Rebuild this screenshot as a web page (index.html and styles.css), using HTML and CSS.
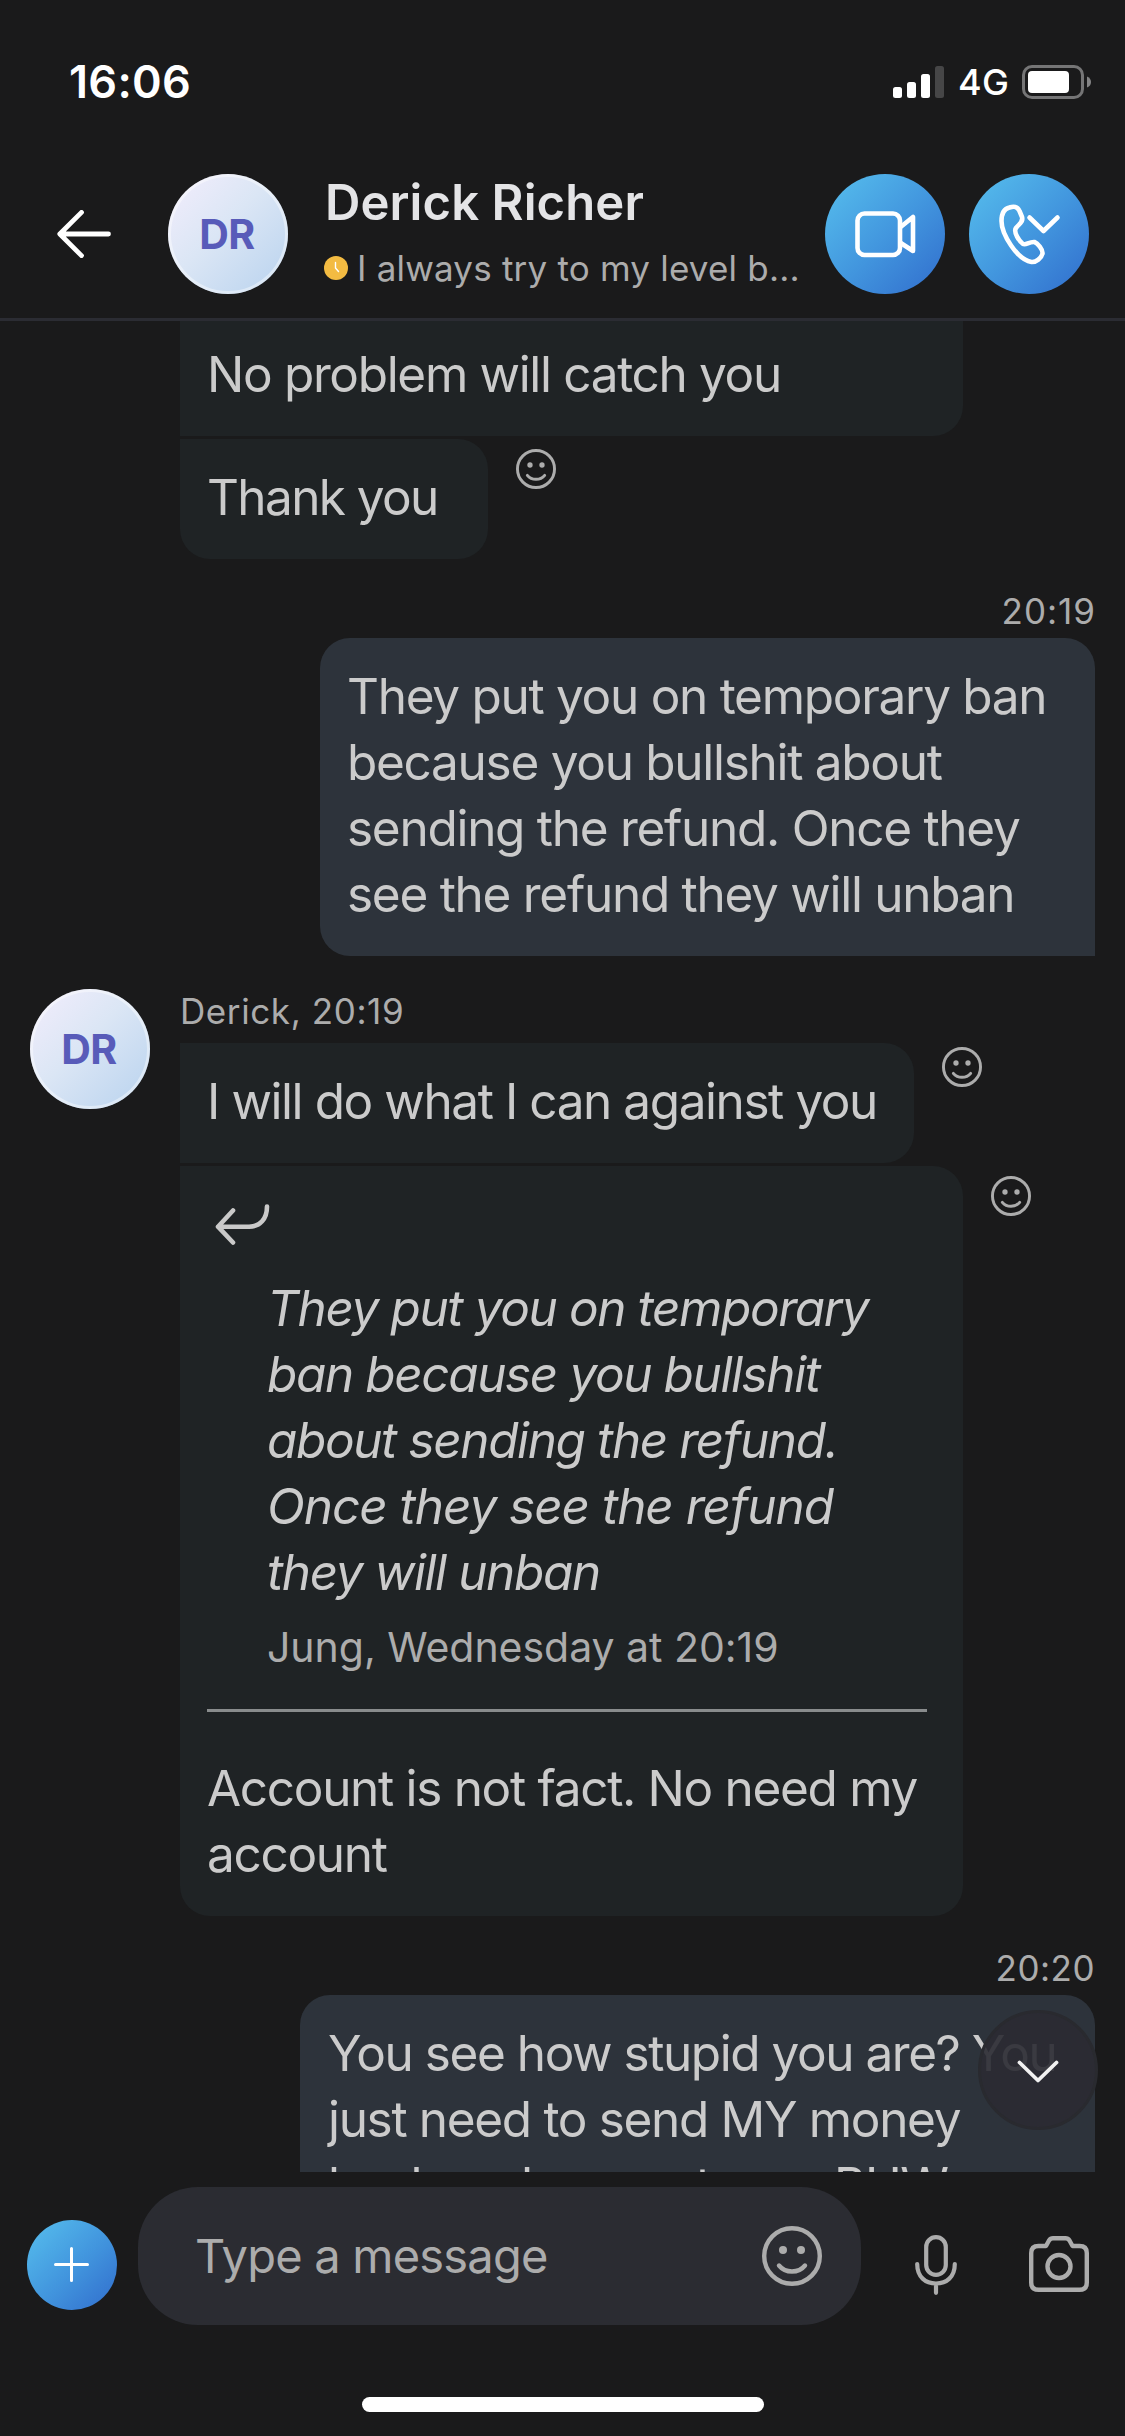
FILE: index.html
```html
<!DOCTYPE html>
<html lang="en">
<head>
<meta charset="utf-8">
<title>Derick Richer</title>
<link rel="stylesheet" href="styles.css">
</head>
<body>
<svg class="defs" aria-hidden="true">
  <symbol id="smile" viewBox="0 0 60 60">
    <circle cx="30" cy="30" r="27.8" fill="none" stroke="currentColor" stroke-width="4.4"/>
    <circle cx="21" cy="24" r="4" fill="currentColor"/>
    <circle cx="39" cy="24" r="4" fill="currentColor"/>
    <path d="M17 39.5C23.500 47.500 36.500 47.500 43 39.500" fill="none" stroke="currentColor" stroke-width="4.4" stroke-linecap="round"/>
  </symbol>
</svg>
<div class="phone">
  <div class="status">
    <span class="clock">16:06</span>
    <div class="indicators">
      <svg class="signal" width="51" height="32" viewBox="0 0 51 32" fill="#fff">
        <rect x="0" y="21" width="9" height="11" rx="2.500"/>
        <rect x="14" y="16" width="9" height="16" rx="2.500"/>
        <rect x="28" y="8" width="9" height="24" rx="2.500"/>
        <rect x="42" y="0" width="9" height="32" rx="2.500" fill="#464647"/>
      </svg>
      <span class="network">4G</span>
      <svg class="battery" width="70" height="34" viewBox="0 0 70 34">
        <rect x="1.500" y="1.500" width="59" height="31" rx="8.500" fill="none" stroke="#757576" stroke-width="3"/>
        <rect x="6" y="6" width="41" height="22" rx="4" fill="#fff"/>
        <path d="M65 11.500C68 12.500 69 15 69 17S68 21.500 65 22.500Z" fill="#848485"/>
      </svg>
    </div>
  </div>

  <header class="header">
    <svg class="back" width="54" height="48" viewBox="0 0 54 48" fill="none" stroke="#fff" stroke-width="4.800" stroke-linecap="round" stroke-linejoin="round"><path d="M24.500 2.400L2.800 24L24.500 45.600M3 24H51.500"/></svg>
    <div class="avatar">DR</div>
    <div class="contact">
      <div class="name">Derick Richer</div>
      <div class="mood">
        <svg width="24" height="24" viewBox="0 0 24 24"><circle cx="12" cy="12" r="12" fill="#f3bb42"/><path d="M11.500 6.500V12L14.500 15.500" fill="none" stroke="#fff" stroke-width="1.400" stroke-linecap="round" stroke-linejoin="round"/></svg>
        <span>I always try to my level b...</span>
      </div>
    </div>
    <div class="calls">
      <svg class="round" viewBox="0 0 120 120" fill="none" stroke="#fff" stroke-width="4.600" stroke-linejoin="round"><rect x="32.500" y="39.500" width="42.500" height="41.500" rx="7"/><path d="M75 53.500L88 43V77L75 68.500"/></svg>
      <svg class="round" viewBox="0 0 120 120" fill="none" stroke="#fff" stroke-width="4.600" stroke-linecap="round" stroke-linejoin="round"><path d="M32.500 47C32.500 39 36 34.500 40.500 33.500C46 31.500 48.500 33 50.500 37L53 43C54.500 48 50 50 47 54C44 58 50.500 67.500 54 70C57 71.500 60 67.500 65.500 68C68.500 69 74 75.500 73.500 79.500C72.500 84 67 88.500 62.500 88C48 85.500 32.500 60 32.500 47Z"/><path d="M60.500 43.500L74.500 57L88.500 43.500"/></svg>
    </div>
  </header>

  <main class="chat">
    <div class="row"><div class="bubble in clipped">No problem will catch you</div></div>
    <div class="row"><div class="bubble in last thanks">Thank you</div><svg class="react low"><use href="#smile"/></svg></div>

    <div class="time">20:19</div>
    <div class="bubble out">They put you on temporary ban<br>because you bullshit about<br>sending the refund. Once they<br>see the refund they will unban</div>

    <section class="group">
      <div class="avatar">DR</div>
      <div class="messages">
        <div class="sender">Derick, 20:19</div>
        <div class="row"><div class="bubble in against">I will do what I can against you</div><svg class="react"><use href="#smile"/></svg></div>
        <div class="row">
          <div class="bubble in last reply">
            <svg class="reply-icon" width="56" height="42" viewBox="0 0 56 42" fill="none" stroke="#c9c9c9" stroke-width="4.600" stroke-linecap="round" stroke-linejoin="round"><path d="M18 6.500L3 22.700L18 38.500M3 22.700H34C45 22.700 52 15 52 2.500"/></svg>
            <blockquote class="quote">
              <p class="quoted">They put you on temporary<br>ban because you bullshit<br>about sending the refund.<br><span class="looser">Once they see the refund</span><br>they will unban</p>
              <footer class="source">Jung, Wednesday at 20:19</footer>
            </blockquote>
            <p class="answer">Account is not fact. No need my<br>account</p>
          </div>
          <svg class="react low"><use href="#smile"/></svg>
        </div>
      </div>
    </section>

    <div class="time late">20:20</div>
    <div class="bubble out wide">You see how stupid you are? You<br><span class="looser">just need to send MY money</span><br>back and respect your BHW</div>

    <div class="scroll-down"><svg width="42" height="24" viewBox="0 0 42 24" fill="none" stroke="#f1f1f1" stroke-width="3.800" stroke-linecap="round" stroke-linejoin="round"><path d="M2.500 2.500L21 20.500L39.500 2.500"/></svg></div>
  </main>

  <footer class="composer">
    <svg class="round add" viewBox="0 0 90 90" stroke="#fff" stroke-width="3" stroke-linecap="round"><path d="M28.500 44.500H60.500M44.500 28.500V60.500"/></svg>
    <div class="field"><span>Type a message</span><svg class="emoji"><use href="#smile"/></svg></div>
    <svg class="mic" width="42" height="60" viewBox="0 0 42 60" fill="none" stroke="#acacac" stroke-width="4.200" stroke-linecap="round"><rect x="11.200" y="2.200" width="19.600" height="37.600" rx="9.800"/><path d="M2.200 29C2.200 42 10.500 48.500 21 48.500S39.800 42 39.800 29M21 49V57.800"/></svg>
    <svg class="camera" width="60" height="56" viewBox="0 0 60 56" fill="none" stroke="#acacac" stroke-width="4.400" stroke-linejoin="round"><path d="M2.200 17Q2.200 10 9.500 10H17L20 4.500Q21.500 2.200 24 2.200H36.500Q39 2.200 40.500 4.500L43.500 10H50.500Q57.800 10 57.800 17V46.500Q57.800 53.800 50.500 53.800H9.500Q2.200 53.800 2.200 46.500Z"/><circle cx="30" cy="30.500" r="11.500"/></svg>
  </footer>
  <div class="home"></div>
</div>
</body>
</html>
```
FILE: styles.css
```css
* { box-sizing: border-box; }

body {
  margin: 0;
  background: #1a1a1b;
  font-family: Inter, "Liberation Sans", sans-serif;
  color: #cbcbcb;
}

svg { display: block; flex: none; }
p, blockquote { margin: 0; }

.defs { display: none; }

.phone {
  display: flex;
  flex-direction: column;
  width: 1125px;
  height: 2436px;
  overflow: hidden;
}

/* Status bar */
.status {
  display: flex;
  justify-content: space-between;
  height: 147px;
  padding: 52px 33px 0 69px;
  color: #fff;
}

.clock {
  font-size: 45px;
  font-weight: 600;
  line-height: 60px;
  letter-spacing: .3px;
}

.indicators { display: flex; align-items: flex-start; }
.signal { margin-top: 14px; }

.network {
  width: 78px;
  padding-left: 14px;
  font-size: 36px;
  font-weight: 500;
  line-height: 60px;
  letter-spacing: .3px;
}

.battery { margin-top: 13px; }

/* Conversation header */
.header {
  display: flex;
  align-items: flex-start;
  height: 174px;
  padding: 27px 36px 0 57px;
  border-bottom: 3px solid #2b2c33;
}

.back { margin: 36px 57px 0 0; }

.avatar {
  display: flex;
  flex: none;
  align-items: center;
  justify-content: center;
  width: 120px;
  height: 120px;
  padding-right: 2px;
  border-radius: 50%;
  background: linear-gradient(135deg, #efecfb 8%, #dbe6f5 45%, #bdd5ef 92%);
  box-shadow: inset 0 0 0 3px rgba(255, 255, 255, .42);
  color: #585bb9;
  font-size: 41px;
  font-weight: 700;
  letter-spacing: -.4px;
}

.contact { flex: 1; margin-left: 36px; white-space: nowrap; }

.name {
  padding-left: 1px;
  color: #e4e4e6;
  font-size: 49px;
  font-weight: 600;
  line-height: 58px;
  letter-spacing: .1px;
}

.mood {
  display: flex;
  align-items: center;
  gap: 9px;
  margin-top: 12px;
  color: #acacac;
  font-size: 35px;
  line-height: 48px;
  letter-spacing: .2px;
}

.calls { display: flex; gap: 24px; }

.round {
  width: 120px;
  height: 120px;
  border-radius: 50%;
  background: linear-gradient(135deg, #52b6ea 12%, #4296de 52%, #3475d0 90%);
}

/* Messages */
.chat {
  position: relative;
  display: flex;
  flex-direction: column;
  flex: none;
  height: 1851px;
  overflow: hidden;
}

.row { display: flex; align-items: flex-start; }
.chat > .row { margin-left: 180px; }
.row + .row { margin-top: 3px; }

.bubble {
  flex: none;
  padding: 25px 27px 29px;
  border-radius: 30px;
  font-size: 49.5px;
  line-height: 66px;
  letter-spacing: -1.28px;
  white-space: nowrap;
}

.in { background: #1f2325; border-radius: 0 30px 30px 0; }
.in.last { border-bottom-left-radius: 30px; }
.clipped { width: 783px; padding-top: 20px; border-top-right-radius: 0; letter-spacing: -1.33px; }
.thanks { width: 308px; letter-spacing: -1.6px; }
.against { width: 734px; letter-spacing: -1.42px; }

.out {
  width: 775px;
  margin-right: 30px;
  align-self: flex-end;
  background: #2d333b;
  border-radius: 30px 30px 0 30px;
}

.out.wide { width: 795px; padding-left: 28px; letter-spacing: -1.45px; }
.wide .looser { letter-spacing: -1.33px; }

.react { width: 40px; height: 40px; margin: 4px 0 0 28px; color: #acacac; }
.react.low { margin-top: 10px; }

.time {
  margin: 28px 29px 3px;
  align-self: flex-end;
  color: #acacac;
  font-size: 35px;
  line-height: 48px;
  letter-spacing: 1px;
}

.time.late { letter-spacing: .5px; margin-right: 30px; }

.group { display: flex; gap: 30px; margin: 33px 0 0 30px; }

.sender {
  margin-bottom: 10px;
  color: #acacac;
  font-size: 35px;
  line-height: 44px;
  letter-spacing: .6px;
}

.reply { width: 783px; letter-spacing: -1.31px; }
.reply-icon { margin: 13px 0 29px 8px; }
.quote { margin-left: 60px; }
.quoted { font-style: italic; letter-spacing: -1.4px; }
.quoted .looser { letter-spacing: -1.05px; }

.source {
  margin-top: 12px;
  color: #acacac;
  font-size: 41px;
  line-height: 60px;
  letter-spacing: -.03px;
}

.answer {
  width: 720px;
  margin-top: 32px;
  padding-top: 43px;
  border-top: 3px solid #898c8d;
}

.scroll-down {
  position: absolute;
  left: 978px;
  top: 1689px;
  display: flex;
  align-items: center;
  justify-content: center;
  width: 120px;
  height: 120px;
  padding-top: 3px;
  border: 3px solid #292a2f;
  border-radius: 50%;
  background: rgba(43, 43, 51, .91);
}

/* Message composer */
.composer {
  display: flex;
  align-items: flex-start;
  height: 225px;
  padding: 15px 36px 0 27px;
}

.add { width: 90px; height: 90px; margin-top: 33px; }

.field {
  display: flex;
  justify-content: space-between;
  width: 723px;
  height: 138px;
  margin-left: 21px;
  padding: 39px 39px 0 57px;
  border-radius: 60px;
  background: #2b2c32;
  color: #acacac;
  font-size: 47px;
  line-height: 60px;
  letter-spacing: -.79px;
}

.emoji { width: 60px; height: 60px; }
.mic { margin: 48px 0 0 54px; }
.camera { margin: 49px 0 0 72px; }

.home {
  width: 402px;
  height: 15px;
  margin-left: 362px;
  border-radius: 8px;
  background: #fff;
}
```
